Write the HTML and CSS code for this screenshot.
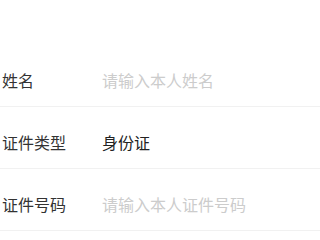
FILE: index.html
```html
<!DOCTYPE html>
<html lang="zh-CN">

<head>
    <meta charset="UTF-8">
    <meta name="viewport" content="width=device-width, initial-scale=1.0">
    <title>实名认证</title>
    <link rel="stylesheet" href="styles.css">
</head>

<body>
    <form class="id_form" action="">
        <div class="form_row">
            <span class="label">姓名</span>
            <input class="field" type="text" placeholder="请输入本人姓名">
        </div>
        <div class="form_row">
            <span class="label">证件类型</span>
            <span class="value">身份证</span>
        </div>
        <div class="form_row">
            <span class="label">证件号码</span>
            <input class="field" type="text" placeholder="请输入本人证件号码">
        </div>
    </form>
</body>

</html>
```

FILE: styles.css
```css
* {
    margin: 0;
    padding: 0;
    box-sizing: border-box;
    font-family: "Noto Sans CJK SC", "Noto Sans", sans-serif;
}

body {
    background: #fff;
    overflow: hidden;
}

.id_form {
    padding-top: 45px;
}

.form_row {
    display: flex;
    align-items: center;
    padding: 25px 0 16px 2px;
    border-bottom: 1px solid #f1f1f1;
}

.label {
    width: 100px;
    font-size: 16px;
    line-height: 20px;
    color: #333;
}

.value {
    font-size: 16px;
    line-height: 20px;
    color: #222;
}

.field {
    flex: 1;
    border: none;
    outline: none;
    background: transparent;
    font-size: 16px;
    line-height: 20px;
    height: 20px;
    color: #222;
}

.field::placeholder {
    color: #cccccc;
}
```
